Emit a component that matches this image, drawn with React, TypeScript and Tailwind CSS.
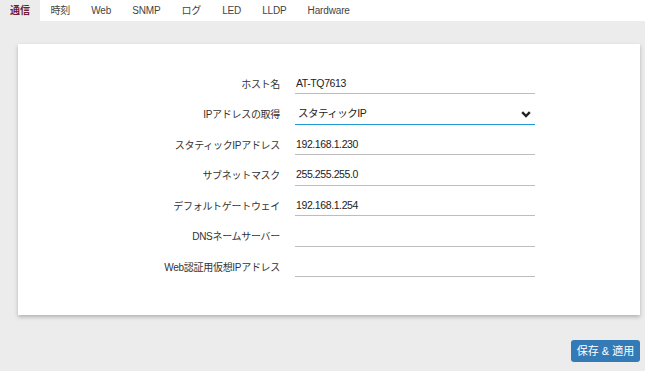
import React from 'react';

const tabs = ['通信', '時刻', 'Web', 'SNMP', 'ログ', 'LED', 'LLDP', 'Hardware'];

const rows: { label: string; value: string; select?: boolean }[] = [
  { label: 'ホスト名', value: 'AT-TQ7613' },
  { label: 'IPアドレスの取得', value: 'スタティックIP', select: true },
  { label: 'スタティックIPアドレス', value: '192.168.1.230' },
  { label: 'サブネットマスク', value: '255.255.255.0' },
  { label: 'デフォルトゲートウェイ', value: '192.168.1.254' },
  { label: 'DNSネームサーバー', value: '' },
  { label: 'Web認証用仮想IPアドレス', value: '' },
];

function FormRow({ label, value, select }: { label: string; value: string; select?: boolean }) {
  return (
    <div className="flex items-center h-[20px]">
      <label className="w-[262px] text-right text-[10px] tracking-[-0.3px] text-[#333]">{label}</label>
      {select ? (
        <div className="ml-[15px] w-[240px] h-[21px] border-b-[1.5px] border-[#1f97d4] flex items-center justify-between pl-[3px] pr-[4px]">
          <span className="text-[10.5px] tracking-[-0.5px] text-[#222]">{value}</span>
          <svg width="10" height="7" viewBox="0 0 10 7">
            <path d="M1.2 1.2 L5 5 L8.8 1.2" fill="none" stroke="#222" strokeWidth="2.4" />
          </svg>
        </div>
      ) : (
        <div className="ml-[15px] w-[240px] h-[20px] border-b border-[#bdbdbd] flex items-center pl-[1px]">
          <span className="text-[10.5px] tracking-[-0.4px] text-[#222]">{value}</span>
        </div>
      )}
    </div>
  );
}

export default function App() {
  return (
    <div
      className="min-h-[371px] bg-[#ececec] flex flex-col"
      style={{ fontFamily: '"Liberation Sans", "Noto Sans CJK JP", sans-serif' }}
    >
      <nav className="h-[21px] bg-white flex items-stretch">
        {tabs.map((t, i) => (
          <div
            key={t}
            className={
              i === 0
                ? 'px-[10px] flex items-center bg-[#ececec] text-[10px] font-bold text-[#6e1f33]'
                : 'px-[10.5px] flex items-center text-[10px] tracking-[-0.15px] text-[#444]'
            }
          >
            {t}
          </div>
        ))}
      </nav>

      <div className="pt-[23px] pl-[18px] pr-[5px]">
        <div className="bg-white h-[271px] pt-[30px] shadow-[0_2px_4px_rgba(0,0,0,0.25)] flex flex-col gap-[10.5px]">
          {rows.map((r) => (
            <FormRow key={r.label} {...r} />
          ))}
        </div>
      </div>

      <div className="flex justify-end pr-[5px] mt-[25px]">
        <button
          type="button"
          className="w-[69px] h-[22px] rounded-[3px] bg-[#337ab7] text-white text-[11px] flex items-center justify-center"
        >
          保存 &amp; 適用
        </button>
      </div>
    </div>
  );
}
